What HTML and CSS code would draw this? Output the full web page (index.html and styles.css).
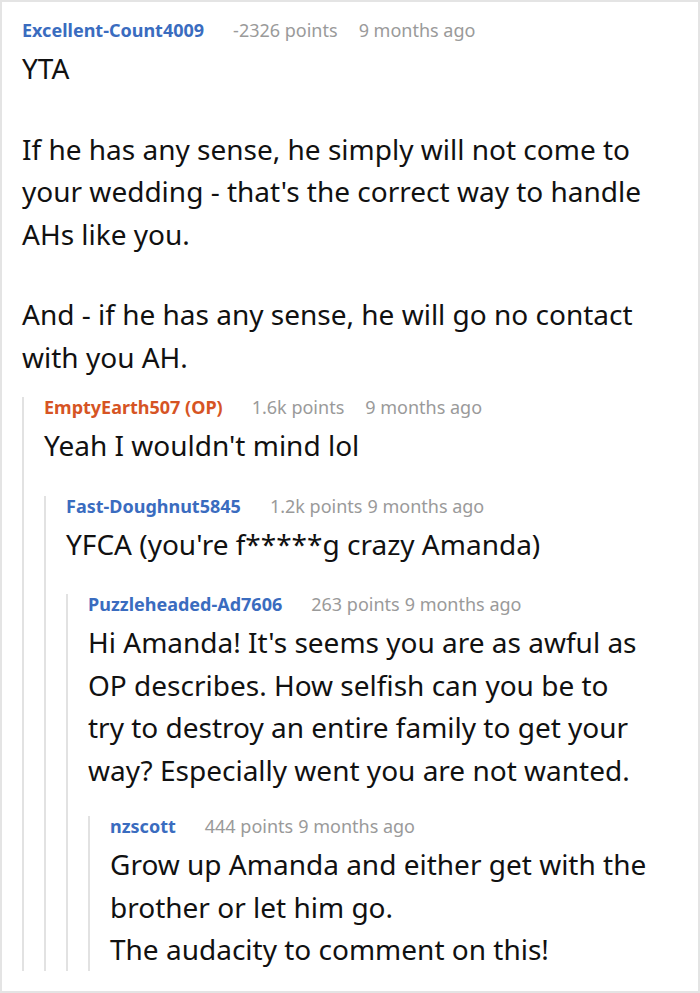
FILE: index.html
```html
<!DOCTYPE html>
<html lang="en">
<head>
<meta charset="utf-8">
<title>Comments</title>
<link rel="stylesheet" href="styles.css">
</head>
<body>
<div class="thread">
  <div class="comment">
    <div class="meta meta-spread"><span class="user">Excellent-Count4009</span><span class="points">-2326 points</span><span class="time">9 months ago</span></div>
    <div class="body">
      <p>YTA</p>
      <p>If he has any sense, he simply will not come to your wedding - that's the correct way to handle AHs like you.</p>
      <p>And - if he has any sense, he will go no contact with you AH.</p>
    </div>
    <div class="comment reply reply-a">
      <div class="meta meta-spread"><span class="user op">EmptyEarth507 (OP)</span><span class="points">1.6k points</span><span class="time">9 months ago</span></div>
      <div class="body"><p>Yeah I wouldn't mind lol</p></div>
      <div class="comment reply reply-b">
        <div class="meta"><span class="user">Fast-Doughnut5845</span><span class="points">1.2k points</span><span class="time">9 months ago</span></div>
        <div class="body"><p>YFCA (you're f*****g crazy Amanda)</p></div>
        <div class="comment reply reply-b">
          <div class="meta"><span class="user">Puzzleheaded-Ad7606</span><span class="points">263 points</span><span class="time">9 months ago</span></div>
          <div class="body"><p>Hi Amanda! It's seems you are as awful as OP describes. How selfish can you be to try to destroy an entire family to get your way? Especially went you are not wanted.</p></div>
          <div class="comment reply reply-c">
            <div class="meta"><span class="user">nzscott</span><span class="points">444 points</span><span class="time">9 months ago</span></div>
            <div class="body body-last"><p>Grow up Amanda and either get with the brother or let him go.<br>The audacity to comment on this!</p></div>
          </div>
        </div>
      </div>
    </div>
  </div>
</div>
</body>
</html>
```

FILE: styles.css
```css
* { box-sizing: border-box; }

html, body {
  margin: 0;
  padding: 0;
  background: #ffffff;
}

body {
  font-family: "Noto Sans", "Open Sans", "DejaVu Sans", sans-serif;
  color: #111111;
}

.thread {
  width: 700px;
  height: 993px;
  border: 2px solid #e4e4e4;
  padding: 18px 49px 0 20px;
  overflow: hidden;
}

.meta {
  font-size: 18px;
  line-height: 20px;
  color: #9a9a9a;
  white-space: nowrap;
}

.user {
  font-weight: 700;
  color: #3a6cbf;
}

.user.op {
  color: #d65424;
}

.points {
  margin-left: 29px;
}

.time {
  margin-left: 5px;
}

.meta-spread .time {
  margin-left: 21px;
}

.body {
  margin-top: 7px;
  font-size: 28px;
  line-height: 42.5px;
}

.body p {
  margin: 0;
}

.body p + p {
  margin-top: 38px;
}

.body-last {
  margin-bottom: -13px;
}

.reply {
  border-left: 2px solid #e2e2e2;
  padding-left: 20px;
}

.reply > .meta {
  margin-top: -4px;
}

.reply-a { margin-top: 23px; }
.reply-b { margin-top: 33px; }
.reply-c { margin-top: 29px; }
```
